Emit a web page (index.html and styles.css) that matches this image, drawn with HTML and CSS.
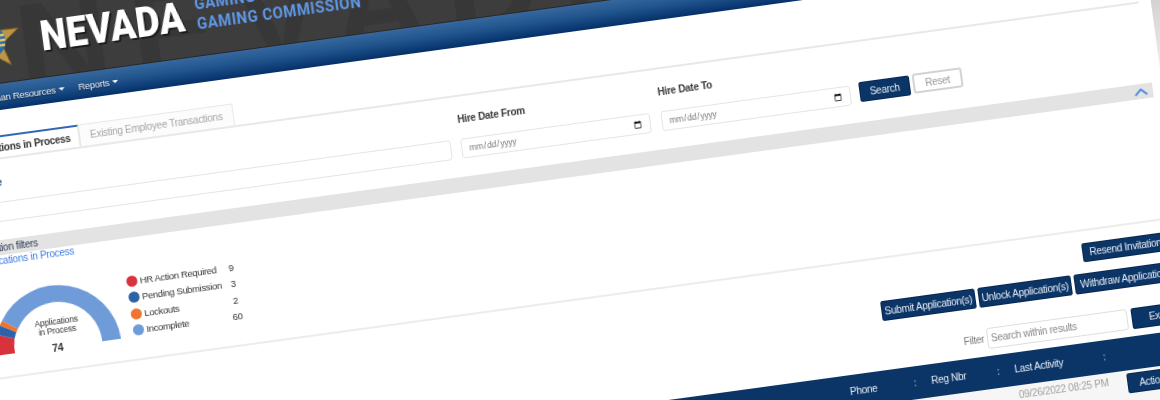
FILE: index.html
```html
<!DOCTYPE html>
<html lang="en">
<head>
    <meta charset="UTF-8">
    <title>Nevada Gaming Control Board</title>
    <link rel="stylesheet" href="styles.css">
</head>
<body>
<div class="page">
    <div class="main">
        <div class="header">
            <div class="watermark">NEVADA</div>
            <svg class="star" width="64" height="68" viewBox="0 0 64 68">
                <polygon points="32,2 39.5,23.7 62.4,24.1 44.1,38 50.8,59.9 32,46.8 13.2,59.9 19.9,38 1.6,24.1 24.5,23.7" fill="#bd9545" stroke="#6d5420" stroke-width="1"/>
                <circle cx="32" cy="34" r="16" fill="#2f6aa8"/>
                <path d="M17 29h30M16 34h32M17 39h30" stroke="#e3c76a" stroke-width="2.4"/>
            </svg>
            <div class="state">NEVADA</div>
            <div class="agency">
                <div>GAMING CONTROL BOARD</div>
                <div>GAMING COMMISSION</div>
            </div>
        </div>
        <div class="nav">
            <span class="nav-item">Human Resources</span>
            <span class="nav-item">Reports</span>
        </div>

        <div class="tabs">
            <div class="tab active">Applications in Process</div>
            <div class="tab">Existing Employee Transactions</div>
        </div>

        <div class="search-form">
            <div class="field field-name">
                <label>Name</label>
                <input type="text">
            </div>
            <div class="field">
                <label>Hire Date From</label>
                <input type="date">
            </div>
            <div class="field">
                <label>Hire Date To</label>
                <input type="date">
            </div>
            <button class="btn btn-search">Search</button>
            <button class="btn-reset">Reset</button>
        </div>

        <div class="band">
            <span>Application filters</span>
            <svg width="14" height="8" viewBox="0 0 14 8">
                <path d="M1 7l6-5.5 6 5.5" fill="none" stroke="#4f87dc" stroke-width="1.8"/>
            </svg>
        </div>

        <div class="filters">
            <a class="filters-link">Applications in Process</a>
            <div class="chart-row">
                <svg class="gauge" width="140" height="75" viewBox="0 0 140 75">
                    <path d="M8 67A63 63 0 0 1 11.5 46.2L28.5 52.4A44 44 0 0 0 27 67Z" fill="#d8323c"/>
                    <path d="M11.5 46.2A63 63 0 0 1 15.6 37.5L31.2 46.3A44 44 0 0 0 28.5 52.4Z" fill="#2c62a8"/>
                    <path d="M15.6 37.5A63 63 0 0 1 18.5 33L33.1 43.3A44 44 0 0 0 31.2 46.3Z" fill="#ee7430"/>
                    <path d="M18.5 33A63 63 0 0 1 134 67L115 67A44 44 0 0 0 33.1 43.3Z" fill="#6f9bd8"/>
                    <text class="gauge-label" x="72" y="44.5" text-anchor="middle">Applications</text>
                    <text class="gauge-label" x="72" y="53.5" text-anchor="middle">in Process</text>
                    <text class="gauge-total" x="70" y="71" text-anchor="middle">74</text>
                </svg>
                <div class="legend">
                    <span class="dot dot-red"></span><span>HR Action Required</span><span class="count">9</span>
                    <span class="dot dot-blue"></span><span>Pending Submission</span><span class="count">3</span>
                    <span class="dot dot-orange"></span><span>Lockouts</span><span class="count">2</span>
                    <span class="dot dot-light"></span><span>Incomplete</span><span class="count">60</span>
                </div>
            </div>
        </div>

        <div class="actions">
            <button class="btn btn-resend">Resend Invitation(s)</button>
            <div class="actions-row">
                <button class="btn btn-submit">Submit Application(s)</button>
                <button class="btn btn-unlock">Unlock Application(s)</button>
                <button class="btn btn-withdraw">Withdraw Application(s)</button>
            </div>
            <div class="filter-row">
                <span class="filter-label">Filter</span>
                <input class="filter-input" type="text" placeholder="Search within results">
                <button class="btn btn-excel">Excel</button>
            </div>
        </div>

        <div class="grid-head">
            <div class="cell"></div>
            <div class="cell">Phone<span class="sort">:</span></div>
            <div class="cell">Reg Nbr<span class="sort">:</span></div>
            <div class="cell">Last Activity<span class="sort">:</span></div>
            <div class="cell"></div>
        </div>
        <div class="grid-row">
            <div></div>
            <div></div>
            <div></div>
            <div class="date-cell">09/26/2022 08:25 PM</div>
            <div class="action-cell"><button class="btn btn-action">Action</button></div>
        </div>
    </div>
    <div class="edge"></div>
</div>
</body>
</html>
```

FILE: styles.css
```css
html, body {
    margin: 0;
    padding: 0;
    width: 1160px;
    height: 400px;
    overflow: hidden;
    background: #fff;
}
/* the whole screen is shown tilted */
.page {
    display: flex;
    width: 1300px;
    height: 640px;
    font-family: "Liberation Sans", Arial, sans-serif;
    font-size: 10px;
    letter-spacing: -0.27px;
    color: #333;
    background: #fff;
    transform-origin: 0 0;
    transform: rotate(-7.8deg) translateX(-100px);
    filter: blur(0.45px);
}
.main {
    width: 1240px;
    flex: none;
}
.edge {
    width: 60px;
    height: 270px;
    background: linear-gradient(#cfcfcf 55%, #fff 100%);
}

.header {
    position: relative;
    display: flex;
    align-items: center;
    height: 83px;
    padding-left: 52px;
    background: #3e3d3d;
    border-bottom: 1px solid #2b2622;
    box-sizing: border-box;
    overflow: hidden;
}
.watermark {
    position: absolute;
    left: 110px;
    top: -22px;
    font-size: 130px;
    font-weight: bold;
    letter-spacing: 20px;
    color: #383737;
}
.star {
    position: relative;
    flex: none;
    align-self: flex-start;
    margin-top: 6px;
}
.state {
    position: relative;
    margin-left: 19px;
    width: 157px;
    font-family: Roboto, "Liberation Sans", sans-serif;
    font-size: 43px;
    font-weight: 900;
    letter-spacing: 0;
    color: #fff;
    text-shadow: 2px 2px 0 #1c1c1c;
    transform: scaleX(0.87);
    transform-origin: left center;
}
.agency {
    position: relative;
    font-family: Roboto, sans-serif;
    font-size: 17px;
    font-weight: 700;
    line-height: 19.6px;
    letter-spacing: 0.6px;
    color: #5e97e6;
    white-space: nowrap;
    transform: scaleX(0.88);
    transform-origin: left center;
}

.nav {
    display: flex;
    align-items: center;
    gap: 14px;
    height: 26px;
    padding-left: 68px;
    font-size: 9.5px;
    background: linear-gradient(#36689e, #21558d 45%, #05306a);
    color: #f2f2f2;
    text-shadow: 0 1px 1px #0a2748;
}
.nav-item::after {
    content: "";
    display: inline-block;
    margin-left: 3px;
    vertical-align: 2px;
    border-left: 3px solid transparent;
    border-right: 3px solid transparent;
    border-top: 3px solid #fff;
}

.tabs {
    display: flex;
    margin-top: 25px;
    padding-left: 33px;
    height: 24px;
    box-sizing: border-box;
    border-bottom: 2px solid #e8e8e8;
    width: 1228px;
}
.tab {
    display: flex;
    align-items: center;
    padding: 0 10px;
    width: 156px;
    box-sizing: border-box;
    color: #a5a5a5;
    background: #fcfcfc;
    border: 1px solid #e8e8e8;
    border-bottom: 0;
    white-space: nowrap;
}
.tab.active {
    width: 127px;
    font-weight: bold;
    color: #333;
    background: #fff;
    border-top: 2px solid #2f68b8;
}

.search-form {
    display: flex;
    align-items: flex-end;
    padding: 16px 0 0 10px;
}
.field {
    display: flex;
    flex-direction: column;
    width: 191px;
    margin-right: 11px;
}
.field label {
    height: 14px;
    margin-bottom: 12px;
    font-weight: bold;
    line-height: 14px;
    color: #3a3a3a;
}
.field-name {
    width: 517px;
    margin-right: 10px;
}
.field-name label {
    padding-left: 41px;
    color: #1c3f78;
}
.field input {
    height: 20px;
    padding: 0 6px;
    box-sizing: border-box;
    border: 1.5px solid #e4e4e4;
    border-radius: 3px;
    font-family: "Liberation Sans", Arial, sans-serif;
    font-size: 8.5px;
    letter-spacing: -0.2px;
    color: #777;
    background: #fff;
}
.btn {
    height: 20px;
    padding: 0;
    border: 1px solid #06264f;
    border-radius: 2px;
    background: #0b3567;
    color: #e8eef6;
    font-family: "Liberation Sans", Arial, sans-serif;
    font-size: 10px;
    letter-spacing: -0.27px;
    white-space: nowrap;
    overflow: hidden;
}
.btn-search {
    width: 51px;
    margin: 0 2px 2px -2px;
}
.btn-reset {
    width: 50px;
    height: 20px;
    margin: 0 0 3px 1px;
    padding: 0;
    border: 2px solid #d2d2d2;
    border-radius: 3px;
    background: #fff;
    color: #999;
    font-family: "Liberation Sans", Arial, sans-serif;
    font-size: 10px;
    letter-spacing: -0.27px;
}

.band {
    display: flex;
    justify-content: space-between;
    align-items: center;
    width: 1230px;
    height: 15px;
    margin-top: 18px;
    padding: 0 5px 0 34px;
    box-sizing: border-box;
    background: #e3e3e3;
    color: #2c3a55;
}

.filters {
    width: 1228px;
    height: 123px;
    padding-left: 42px;
    box-sizing: border-box;
    border-bottom: 2px solid #ececec;
}
.filters-link {
    display: block;
    line-height: 12px;
    color: #3f7de6;
}
.chart-row {
    display: flex;
    margin: 20px 0 0 -2px;
}
.gauge {
    flex: none;
}
.gauge-label {
    font-size: 8.5px;
    letter-spacing: -0.2px;
    fill: #333;
}
.gauge-total {
    font-size: 10.5px;
    font-weight: bold;
    fill: #333;
}
.legend {
    display: grid;
    grid-template-columns: 11px 77px 24px;
    grid-auto-rows: 16.5px;
    align-items: center;
    column-gap: 3px;
    margin: 2.75px 0 0 6.5px;
    font-size: 9.5px;
    letter-spacing: -0.35px;
    white-space: nowrap;
}
.dot {
    width: 11px;
    height: 11px;
    border-radius: 50%;
}
.dot-red { background: #d8323c; }
.dot-blue { background: #2c62a8; }
.dot-orange { background: #ee7430; }
.dot-light { background: #6f9bd8; }
.count {
    text-align: center;
}

.actions {
    display: flex;
    flex-direction: column;
    align-items: flex-end;
    padding: 12px 4px 0 0;
}
.btn-resend {
    width: 98px;
    height: 19px;
}
.actions-row {
    display: flex;
    gap: 3px;
    margin-top: 11px;
}
.btn-submit { width: 95px; }
.btn-unlock { width: 94px; }
.btn-withdraw { width: 110px; }
.filter-row {
    display: flex;
    align-items: center;
    margin-top: 21px;
}
.filter-label {
    margin-right: 3px;
    color: #777;
}
.filter-input {
    width: 142px;
    height: 21px;
    padding: 0 3px;
    box-sizing: border-box;
    border: 1.5px solid #dedede;
    border-radius: 3px;
    font-family: "Liberation Sans", Arial, sans-serif;
    font-size: 10px;
    letter-spacing: -0.27px;
    margin-right: 4px;
}
.filter-input::placeholder {
    color: #888;
}
.btn-excel {
    width: 58px;
    height: 21px;
}

.grid-head, .grid-row {
    display: grid;
    grid-template-columns: 874px 82px 84px 107px 93px;
}
.grid-head {
    height: 33px;
    margin-top: 7px;
    background: #0b3567;
    color: #e8eef6;
}
.cell {
    display: flex;
    justify-content: space-between;
    align-items: center;
    padding-left: 15px;
}
.sort {
    color: #7f93ad;
    font-weight: bold;
}
.grid-row {
    height: 40px;
    padding-top: 3px;
    box-sizing: border-box;
    background: #f6f6f6;
}
.date-cell {
    padding-left: 16px;
    line-height: 14px;
    color: #a0a0a0;
    white-space: nowrap;
}
.action-cell {
    padding-left: 18px;
}
.btn-action {
    width: 50px;
}
```
